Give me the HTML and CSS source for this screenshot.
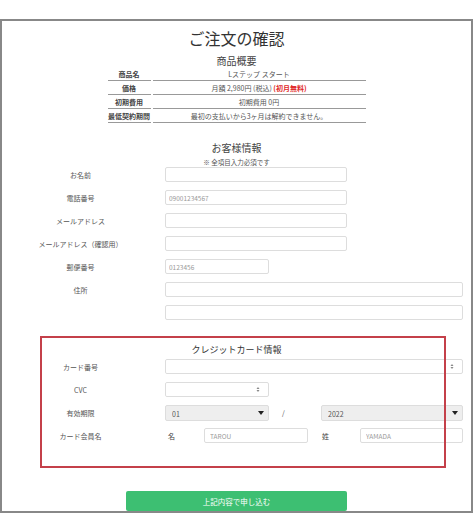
FILE: index.html
```html
<!DOCTYPE html>
<html lang="ja">
<head>
  <meta charset="UTF-8" />
  <meta name="viewport" content="width=device-width, initial-scale=1.0"/>
  <title>ご注文の確認</title>
  <link rel="stylesheet" href="styles.css">
</head>
<body>
  <div class="frame">
    <h1>ご注文の確認</h1>
    <h2>商品概要</h2>
    <table class="summary">
      <tr><th>商品名</th><td>Lステップ スタート</td></tr>
      <tr><th>価格</th><td>月額 2,980円 (税込) <span class="free">(初月無料)</span></td></tr>
      <tr><th>初期費用</th><td>初期費用 0円</td></tr>
      <tr><th>最低契約期間</th><td>最初の支払いから3ヶ月は解約できません。</td></tr>
    </table>

    <h2 class="section-title">お客様情報</h2>
    <p class="note">※ 全項目入力必須です</p>
    <div class="form">
      <div class="row"><label>お名前</label><input class="w-md" type="text"></div>
      <div class="row"><label>電話番号</label><input class="w-md" type="tel" placeholder="09001234567"></div>
      <div class="row"><label>メールアドレス</label><input class="w-md" type="email"></div>
      <div class="row"><label>メールアドレス（確認用）</label><input class="w-md" type="email"></div>
      <div class="row"><label>郵便番号</label><input class="w-sm" type="text" placeholder="0123456"></div>
      <div class="row"><label>住所</label><input class="w-lg" type="text"></div>
      <div class="row"><label></label><input class="w-lg" type="text"></div>
    </div>

    <div class="card">
      <div class="highlight"></div>
      <h3>クレジットカード情報</h3>
      <div class="form">
        <div class="row">
          <label>カード番号</label>
          <div class="field w-lg">
            <input type="text">
            <svg class="spin" viewBox="0 0 4 7"><polygon points="0.5,3 2,1 3.5,3"/><polygon points="0.5,4 2,6 3.5,4"/></svg>
          </div>
        </div>
        <div class="row">
          <label>CVC</label>
          <div class="field w-sm">
            <input type="text">
            <svg class="spin" viewBox="0 0 4 7"><polygon points="0.5,3 2,1 3.5,3"/><polygon points="0.5,4 2,6 3.5,4"/></svg>
          </div>
        </div>
        <div class="row">
          <label>有効期限</label>
          <div class="select w-sm">
            <select><option>01</option></select>
            <svg class="arrow" viewBox="0 0 6 4"><polygon points="0,0 6,0 3,4"/></svg>
          </div>
          <span class="slash">/</span>
          <div class="select w-year">
            <select><option>2022</option></select>
            <svg class="arrow" viewBox="0 0 6 4"><polygon points="0,0 6,0 3,4"/></svg>
          </div>
        </div>
        <div class="row">
          <label>カード会員名</label>
          <span class="mini first">名</span>
          <input class="w-sm name" type="text" placeholder="TAROU">
          <span class="mini last">姓</span>
          <input class="w-name name" type="text" placeholder="YAMADA">
        </div>
      </div>
    </div>

    <button class="submit">上記内容で申し込む</button>
  </div>
</body>
</html>
```

FILE: styles.css
```css
* {
  box-sizing: border-box;
}
body {
  margin: 0;
  background: #fff;
  font-family: "Noto Sans CJK JP", "Noto Sans", sans-serif;
  color: #555;
}
.frame {
  width: 473px;
  height: 494px;
  margin-top: 19px;
  border: 2px solid #888;
  padding-top: 7px;
  overflow: hidden;
}
h1 {
  margin: 0;
  font-size: 16px;
  line-height: 20px;
  font-weight: normal;
  text-align: center;
  color: #333;
}
h2 {
  margin: 7px 0 0;
  font-size: 10px;
  line-height: 12px;
  font-weight: normal;
  text-align: center;
  color: #444;
}
.summary {
  margin: 0 auto;
  border-collapse: separate;
  border-spacing: 2px 0;
  font-size: 7px;
}
.summary th,
.summary td {
  padding: 2px 0 0;
  line-height: 11px;
  border-bottom: 1px solid #999;
  text-align: center;
}
.summary th {
  width: 43px;
  font-weight: bold;
  color: #444;
}
.summary td {
  width: 213px;
  color: #555;
}
.free {
  color: #e02828;
  font-weight: bold;
}
h2.section-title {
  margin-top: 18px;
  line-height: 14px;
}
.note {
  margin: 2px 0 0;
  font-size: 6.5px;
  line-height: 10px;
  text-align: center;
}
.form {
  display: flex;
  flex-direction: column;
  gap: 8px;
}
.row {
  display: flex;
  align-items: center;
  height: 15px;
}
.row label {
  width: 157px;
  margin-right: 6px;
  text-align: center;
  font-size: 7px;
  color: #555;
}
input {
  height: 15px;
  border: 1px solid #ddd;
  border-radius: 2px;
  padding: 0 3px;
  font-family: inherit;
  font-size: 6.5px;
  color: #555;
  background: #fff;
}
input::placeholder {
  color: #999;
}
.w-sm { width: 104px; }
.w-md { width: 182px; }
.w-lg { width: 298px; }
.w-year { width: 142px; }
.w-name { width: 103px; }
.field {
  display: flex;
  align-items: center;
  height: 15px;
  border: 1px solid #ddd;
  border-radius: 2px;
  background: #fff;
}
.field input {
  flex: 1;
  min-width: 0;
  height: 13px;
  border: none;
}
.spin {
  width: 4px;
  height: 7px;
  margin-right: 8px;
  fill: #888;
}
.select {
  display: flex;
  align-items: center;
  height: 16px;
  border: 1px solid #ddd;
  border-radius: 2px;
  background: #eee;
}
.select select {
  flex: 1;
  min-width: 0;
  height: 14px;
  appearance: none;
  border: none;
  background: transparent;
  padding: 3px 0 0 6px;
  font-family: inherit;
  font-size: 7px;
  color: #555;
}
.arrow {
  width: 6px;
  height: 4px;
  margin-right: 4px;
  fill: #222;
}
.slash {
  width: 52px;
  padding-left: 13px;
  font-size: 7px;
}
.mini {
  font-size: 7px;
  color: #444;
}
.mini.first {
  width: 39px;
  padding-left: 3px;
}
.mini.last {
  width: 52px;
  padding-left: 14px;
}
input.name {
  padding: 0 5px;
}
.card {
  position: relative;
  padding-top: 24px;
}
.card h3 {
  margin: 0 0 3px;
  font-size: 9px;
  line-height: 12px;
  font-weight: normal;
  text-align: center;
  color: #333;
}
.highlight {
  position: absolute;
  top: 16px;
  left: 38px;
  width: 406px;
  height: 132px;
  border: 2px solid #c4404a;
  pointer-events: none;
}
.submit {
  display: block;
  width: 221px;
  height: 20px;
  margin: 48px auto 0;
  border: none;
  border-radius: 2px;
  background: #3dbf72;
  color: #fff;
  font-family: inherit;
  font-size: 7.5px;
  cursor: pointer;
}
```
